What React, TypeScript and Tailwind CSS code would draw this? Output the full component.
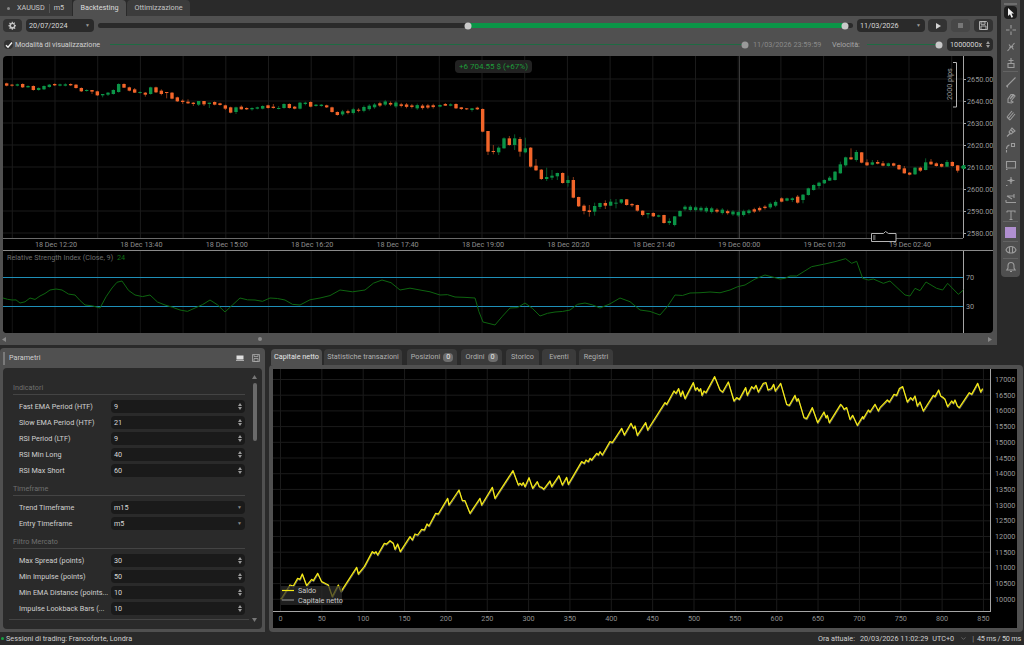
import { ChevronDown } from "lucide-react";

type Candle = [number, number, number, number?, number?];

// [kind 0 green / 1 orange, bodyTop, bodyBottom, wickTop, wickBottom] in zoomed px
const leftCandles: Candle[] = [
  [1,250,257],[1,254,257,252,260],[0,253,257],[1,252,262],[0,258,262,256,263],[1,258,270],[0,264,270],[0,258,268],[0,254,261],[1,252,256,250,258],
  [0,253,257,251,259],[0,253,257,250,259],[1,252,256,250,258],[1,254,264],[1,264,274],[0,270,273],[1,270,275,270,282],[1,274,286],[0,282,286,282,292],[0,278,284,276,288],
  [0,270,282],[0,252,276],[1,252,263,250,264],[1,262,272],[1,268,278,264,279],[0,276,279],[1,278,284,276,290],[0,262,282],[1,262,277,260,279],[1,272,282,268,286],
  [1,276,279,276,295],[1,278,296],[1,292,304],[1,302,306,298,312],[1,305,310,298,312],[1,308,312,306,318],[0,303,314,303,318],[1,303,313,303,318],[0,308,312,308,324],[1,306,314,304,316],
  [1,310,315],[1,316,326,314,330],[1,322,338],[0,322,336,320,342],[1,320,328,316,329],[1,324,328],[0,324,328,322,332],[0,322,326],[0,318,326],[1,316,324],
  [1,320,324,312,326],[0,324,326,318,328],[0,312,324],[1,312,324],[1,320,326],[0,308,326],[0,308,312,305,316],[1,306,320],[0,314,318],[0,314,318],
  [1,316,322],[1,322,336],[1,336,345],
];

const midCandles: Candle[] = [
  [0,150,155],[1,147,152,144,153],[0,148,152,145,154],[1,147,160],[1,157,162,156,165],[1,160,162,159,165],[0,160,165,159,170],[1,158,163,155,165],[1,162,230],[1,228,290,228,300],
  [1,288,290,270,298],[0,278,292,274,300],[0,250,280,247,281],[1,250,270,243,272],[0,250,270,238,285],[1,252,290,246,305],[0,280,292,248,295],[1,278,335,276,338],[1,332,346,312,348],[1,344,372,342,375],
  [0,366,372,338,378],[0,362,368,345,375],[0,354,364,353,375],[1,354,384],[0,375,384,362,395],[1,375,428,366,430],[1,426,454,425,456],[1,452,468,448,478],[1,466,471,450,485],[0,453,470,443,482],
  [0,444,456,443,462],[1,444,452,436,462],[0,440,452,432,453],[0,443,446,432,460],[0,433,443,432,447],[1,433,450,432,452],[1,447,451,444,456],[1,450,467,449,470],[1,467,480,466,484],[0,474,478,474,490],
  [1,474,484,472,486],[0,481,485],[1,480,504,479,506],[0,498,504,490,510],[0,484,510,483,514],[0,468,484],
];

const rightCandles: Candle[] = [
  [1,205,215,202,217],[0,205,212],[0,205,210,202,216],[1,200,218,195,221],[0,194,210,192,220],[0,175,195],[0,165,180,163,182],[0,158,168,155,176],[0,150,160],[0,143,152,138,153],
  [0,125,150],[0,103,130,95,131],[0,82,106,80,110],[1,82,88,55,90],[0,66,90,60,95],[1,67,98,66,100],[1,97,106,88,108],[0,97,104,90,106],[1,96,101,90,103],[1,100,107,93,109],
  [0,100,108,98,110],[1,100,107,98,109],[1,105,118,103,120],[1,115,130,108,131],[1,128,134],[0,113,133],[1,113,122,110,126],[0,97,120,85,121],[1,95,103,87,105],[1,100,108,97,110],
  [1,102,110,100,112],[0,96,110,90,111],[1,96,108],[1,106,122,105,128],[0,108,115],
];

const noise = (x: number) => {
  const n = Math.sin(x * 12.9898) * 43758.5453;
  return n - Math.floor(n);
};

const interp = (pts: number[][], x: number) => {
  for (let i = 1; i < pts.length; i++) {
    if (x <= pts[i][0]) {
      const t = (x - pts[i - 1][0]) / (pts[i][0] - pts[i - 1][0]);
      return pts[i - 1][1] + t * (pts[i][1] - pts[i - 1][1]);
    }
  }
  return pts[pts.length - 1][1];
};

const fillers = (x0: number, x1: number, pts: number[][]) => {
  const out: { x: number; kind: number; top: number; bottom: number; wt: number; wb: number }[] = [];
  for (let x = x0; x <= x1; x += 5.33) {
    const y = interp(pts, x);
    const r = noise(x);
    const h = 1 + r * 3;
    out.push({ x, kind: r > 0.5 ? 0 : 1, top: y - h / 2, bottom: y + h / 2, wt: y - h / 2 - 1.5, wb: y + h / 2 + 1.5 });
  }
  return out;
};

const toCandles = (list: Candle[], start: number, ox: number, oy: number) =>
  list.map((c, i) => ({
    x: ox + (start + i * 16) / 3,
    kind: c[0],
    top: oy + c[1] / 3,
    bottom: oy + c[2] / 3,
    wt: oy + (c[3] ?? c[1] - 2) / 3,
    wb: oy + (c[4] ?? c[2] + 2) / 3,
  }));

const candles = [
  ...toCandles(leftCandles, 20, 0, 0),
  ...fillers(342.6, 435, [[342, 113], [360, 110], [385, 103], [400, 105], [420, 107], [436, 106]]),
  ...toCandles(midCandles, 0, 440, 55),
  ...fillers(685, 777, [[685, 208], [700, 209], [720, 211], [740, 214], [760, 209], [778, 203]]),
  ...toCandles(rightCandles, 5, 780, 130),
];

const rsi1 = [[3,298],[12,300],[20,303],[30,298],[40,296],[50,290],[62,290],[75,295],[85,305],[100,308],[112,288],[122,281],[135,295],[150,295],[165,305],[180,310],[195,308],[210,300],[225,312],[240,298],[255,300],[270,298],[285,300],[300,305],[320,298],[340,290],[365,290],[382,280],[400,290],[420,290],[440,295],[455,297],[475,298],[483,322],[495,325],[510,308],[525,303],[540,316],[555,312],[570,310],[585,303],[600,308],[620,298],[640,310],[660,315],[675,295],[690,293],[710,292],[730,290],[745,285],[765,275]];
const rsi2 = [[0,447],[15,445],[30,438],[50,438],[95,410],[130,403],[165,395],[197,386],[215,400],[230,394],[248,445],[265,450],[280,447],[310,460],[330,453],[375,495],[390,498],[405,475],[420,482],[438,456],[470,475],[488,480],[503,460],[535,493],[550,480]];

// the rsi samples every candle, so break the long segments up a little
const rsiPoints = [...rsi1.flatMap(([x, y], i) => {
  const next = rsi1[i + 1];
  if (!next) return [[x, y]];
  return [[x, y], [(x + next[0]) / 2, (y + next[1]) / 2 + (noise(x) - 0.5) * 5]];
}), ...rsi2.map(([x, y]) => [780 + x / 3, 130 + y / 3])];
const rsiLine = rsiPoints.map((p) => p.join(",")).join(" ");

const eq1 = [[18,688],[45,645],[55,648],[68,625],[75,628],[82,612],[95,647],[110,628],[115,632],[128,610],[140,635],[160,645],[172,680],[190,645],[198,665],[245,592],[250,612],[268,590],[292,545],[298,550],[303,545],[308,555],[328,520],[335,522],[345,512],[355,520],[360,538],[368,522],[376,545],[405,500],[412,510],[420,492],[428,495],[440,478],[448,480],[456,462],[462,468],[482,430],[490,432],[518,385],[522,405],[552,360],[562,392],[570,392],[585,430],[615,385],[620,405],[652,352],[660,385],[714,302],[730,345],[735,340],[740,345],[745,338],[750,350],[762,323],[773,355],[787,335],[793,350],[800,352],[806,358],[825,333],[830,350],[852,317],[862,345],[875,322],[880,343],[920,275],[928,280],[933,270],[940,275],[945,265],[950,270],[965,250],[970,255],[975,245],[982,255],[1005,215],[1012,218],[1040,175],[1048,195],[1068,160],[1075,175],[1080,170]];
const eq2 = [[15,180],[22,208],[47,170],[53,192],[105,110],[110,115],[132,75],[138,82],[146,68],[152,90],[158,75],[165,98],[190,50],[196,72],[202,65],[207,75],[212,68],[216,88],[222,75],[228,80],[254,32],[270,72],[278,78],[295,48],[312,105],[320,95],[328,100],[347,65],[352,88],[365,62],[372,68],[378,58],[385,78],[400,52],[408,50],[414,72],[424,68],[431,55],[436,75],[452,52],[470,115],[478,118],[495,88],[500,105],[505,98],[522,155],[530,158],[547,125],[563,170],[582,138],[588,155],[592,148],[598,170],[632,115],[638,122],[642,130],[650,125],[660,160],[668,148],[682,178],[698,152],[700,158],[715,132],[720,138],[735,115],[745,135],[750,125],[772,102],[778,108],[792,85],[800,88],[808,68],[818,62],[832,108],[842,95],[848,102],[855,90],[862,120],[870,108],[880,135],[910,88],[915,92],[926,72],[932,90],[940,95],[945,100],[953,122],[965,105],[970,112],[975,102],[982,120],[988,125],[1018,80],[1025,85],[1043,52],[1052,78],[1058,68]];
const equityLine = [
  ...eq1.map(([x, y]) => [275 + x / 3, 370 + y / 3]),
  ...eq2.map(([x, y]) => [630 + x / 3, 366 + y / 3]),
].map((p) => p.join(",")).join(" ");

const timeLabels = ["18 Dec 12:20","18 Dec 13:40","18 Dec 15:00","18 Dec 16:20","18 Dec 17:40","18 Dec 19:00","18 Dec 20:20","18 Dec 21:40","19 Dec 00:00","19 Dec 01:20","19 Dec 02:40"];
const priceLabels = ["2650.00","2640.00","2630.00","2620.00","2610.00","2600.00","2590.00","2580.00"];

function MainChart() {
  const vLines = Array.from({ length: 23 }, (_, i) => 12.3 + i * 42.7);
  return (
    <svg width="990" height="277" viewBox="3 56 990 277" className="block rounded-sm bg-black">
      {vLines.map((x) => (
        <line key={x} x1={x} x2={x} y1={56} y2={333} stroke="#1b1b1b" strokeWidth="1" />
      ))}
      {priceLabels.map((_, i) => (
        <line key={i} x1={3} x2={963} y1={79 + i * 22} y2={79 + i * 22} stroke="#1b1b1b" strokeWidth="1" />
      ))}
      <line x1={739.5} x2={739.5} y1={56} y2={238} stroke="#3a3a3a" />
      {candles.map((c, i) => {
        const color = c.kind === 0 ? "#0b9447" : "#f2652a";
        const wick = c.kind === 0 ? "#0a6e36" : "#a8481f";
        return (
          <g key={i}>
            <line x1={c.x} x2={c.x} y1={c.wt} y2={c.wb} stroke={wick} strokeWidth="0.8" />
            <rect x={c.x - 1.7} y={c.top} width={3.4} height={Math.max(c.bottom - c.top, 1)} fill={color} />
          </g>
        );
      })}

      <rect x={3} y={239} width={960} height={11} fill="#000" />
      <rect x={3} y={251} width={960} height={82} fill="#000" />
      <line x1={3} x2={963} y1={238.5} y2={238.5} stroke="#6a6a6a" />
      <line x1={963.5} x2={963.5} y1={56} y2={238} stroke="#a5a5a5" />
      <line x1={3} x2={993} y1={250.5} y2={250.5} stroke="#8a8a8a" />
      <line x1={963.5} x2={963.5} y1={251} y2={333} stroke="#a5a5a5" />
      {timeLabels.map((t, i) => (
        <text key={t} x={56 + i * 85.4} y={247} textAnchor="middle" fontSize="7.25" fill="#8f8f8f">{t}</text>
      ))}
      {priceLabels.map((t, i) => (
        <g key={t}>
          <line x1={963} x2={966} y1={79.5 + i * 22} y2={79.5 + i * 22} stroke="#a5a5a5" />
          <text x={967} y={82 + i * 22} fontSize="7.25" fill="#999">{t}</text>
        </g>
      ))}
      <rect x={962.5} y={165} width={3} height={4} fill="#0b9447" />

      {/* pips ruler */}
      <path d="M953 62.5h3.5v44.5h-3.5" fill="none" stroke="#b5b5b5" />
      <text transform="translate(952 100) rotate(-90)" fontSize="7.25" fill="#999">2000 pips</text>

      {/* zoom handle */}
      <path d="M871.5 233.5h12l2-2 3 2h7.5v8h-24.5z" fill="#000" stroke="#b5b5b5" />
      <rect x={873} y={235} width={2.5} height={5} fill="#555" />

      {/* rsi panel */}
      {vLines.map((x) => (
        <line key={x} x1={x} x2={x} y1={251} y2={333} stroke="#141414" />
      ))}
      <line x1={739.5} x2={739.5} y1={251} y2={333} stroke="#2c2c2c" />
      <line x1={3} x2={963} y1={277.5} y2={277.5} stroke="#1f8fb8" />
      <line x1={3} x2={963} y1={306.5} y2={306.5} stroke="#1f8fb8" />
      <polyline points={rsiLine} fill="none" stroke="#0e6510" strokeWidth="1" />
      <text x={7} y={260} fontSize="7.25" fill="#6f6f6f">Relative Strength Index (Close, 9)</text>
      <text x={117} y={260} fontSize="7.25" fill="#0e6f14">24</text>
      <text x={966} y={280} fontSize="7.25" fill="#999">70</text>
      <text x={966} y={309} fontSize="7.25" fill="#999">30</text>
    </svg>
  );
}

function EquityChart() {
  const xs = Array.from({ length: 18 }, (_, i) => i * 50);
  const ys = Array.from({ length: 15 }, (_, i) => 17000 - i * 500);
  return (
    <svg width="744" height="259" viewBox="273 369 744 259" className="block bg-black">
      {xs.map((v, i) => (
        <line key={v} x1={280.5 + i * 41.35} x2={280.5 + i * 41.35} y1={369} y2={611} stroke="#1b1b1b" />
      ))}
      {ys.map((v, i) => (
        <line key={v} x1={273} x2={990} y1={379.5 + i * 15.7} y2={379.5 + i * 15.7} stroke="#1b1b1b" />
      ))}
      <polyline points={equityLine} fill="none" stroke="#5e5e5e" strokeWidth="1" transform="translate(0.4 1.2)" />
      <polyline points={equityLine} fill="none" stroke="#f5ea14" strokeWidth="1.3" strokeLinejoin="round" />
      <line x1={273} x2={990} y1={611.5} y2={611.5} stroke="#a5a5a5" />
      <line x1={990.5} x2={990.5} y1={369} y2={612} stroke="#a5a5a5" />
      {xs.map((v, i) => (
        <text key={v} x={280.5 + i * 41.35} y={621} textAnchor="middle" fontSize="7.25" fill="#8f8f8f">{v}</text>
      ))}
      {ys.map((v, i) => (
        <text key={v} x={995} y={382 + i * 15.7} fontSize="7.25" fill="#999">{v}</text>
      ))}
      <rect x={281} y={586} width={61} height={19} fill="#2c2c2c" fillOpacity="0.72" />
      <line x1={282} x2={294} y1={590.5} y2={590.5} stroke="#f5ea14" strokeWidth="1.2" />
      <line x1={282} x2={294} y1={600} y2={600} stroke="#888" strokeWidth="1.2" />
      <text x={298} y={593} fontSize="7.25" fill="#c8c8c8">Saldo</text>
      <text x={298} y={602.5} fontSize="7.25" fill="#c8c8c8">Capitale netto</text>
    </svg>
  );
}

function ToolIcon({ d, fill }: { d: string; fill?: boolean }) {
  return (
    <svg width="12" height="12" viewBox="0 0 12 12" className="block">
      <path d={d} fill={fill ? "#f0f0f0" : "none"} stroke={fill ? "none" : "#9c9c9c"} strokeWidth="1.1" />
    </svg>
  );
}

const toolGroups: string[][] = [
  [
    "M3 1l6 5.5H6.5L8 10l-1.5.7L5 7.2 3 9z",
    "M6 1v3.5M6 7.5V11M1 6h3.5M7.5 6H11",
    "M9.5 2L2.5 10M4 3.5l1.5 2L4.5 7M8 5l-1 1.5L8.5 8.5",
    "M6 1v5M3.5 3.5h5M3 6.5h6v4H3z",
  ],
  [
    "M1.5 10.5l9-9M1 10h1.5v1.5",
    "M3 10.5V7l3-4.5h2L5 7l4-4 1 1-4 5 2 1-1.5 1z",
    "M2 8l5-6M3.5 9.5l5-6M5 11l5-6M2 8l3 3",
    "M2 10.5l3-3M4 6l3-4 3 3-4 3zM6 4l2 2",
    "M1.5 10.5V8M1.5 7c0-2 1-3.5 3-4M6.5 1.5h3v3h-3z",
    "M1.5 2.5h9v6.5h-9zM1 10.5h1.5",
    "M6 2v7M2.5 5.5h7M1 10.5h1.5M6 4l1.5 1.5L6 7 4.5 5.5z",
    "M2 4h7M9 2v4M2 4l5 3M1 10.5h10M1 8v2.5",
    "M2 2h8v1.5M2 3.5V2M6 2v8.5M4.5 10.5h3",
  ],
];

function Toolbar() {
  return (
    <div className="flex h-[277px] w-[19px] flex-col items-center rounded-b-sm bg-[#4f4f4f]">
      <div className="mt-[3px] h-[2px] w-[13px] bg-[#6e6e6e]" />
      <div className="mt-[1px] flex h-[13px] w-[13px] items-center justify-center rounded-sm bg-[#1d1d1d]">
        <ToolIcon d={toolGroups[0][0]} fill />
      </div>
      <div className="mt-[5px] flex flex-col items-center gap-[4.7px]">
        {toolGroups[0].slice(1).map((d) => <ToolIcon key={d} d={d} />)}
      </div>
      <div className="mt-[1.500px] mb-[4px] h-px w-[15px] bg-[#636363]" />
      <div className="flex flex-col items-center gap-[4.6px]">
        {toolGroups[1].map((d) => <ToolIcon key={d} d={d} />)}
      </div>
      <div className="mb-[5px] h-px w-[15px] bg-[#636363]" />
      <div className="h-[11px] w-[11px] bg-[#b08fd0]" />
      <div className="mt-[3px] mb-[2px] h-px w-[15px] bg-[#636363]" />
      <ToolIcon d="M1 6c1-3 3-3.5 5-3.5S10 3 11 6c-1 2.5-3 3-5 3S2 8.5 1 6zM4.5 3v6M7.5 3v6" />
      <div className="mt-[2px] mb-[2px] h-px w-[15px] bg-[#636363]" />
      <ToolIcon d="M6 1.5c2 0 3 1.3 3 3.5v2l1.2 2H1.8L3 7V5c0-2.200 1-3.500 3-3.500zM5 10.500h2" />
    </div>
  );
}

function Thumb({ className }: { className: string }) {
  return <div className={`absolute top-1/2 h-[7px] w-[7px] -translate-x-1/2 -translate-y-1/2 rounded-full ${className}`} />;
}

function DateBox({ value, className }: { value: string; className: string }) {
  return (
    <div className={`flex h-[13px] items-center justify-between rounded-sm bg-[#2a2a2a] pl-[3px] pr-[4px] text-[#d8d8d8] ${className}`}>
      <span>{value}</span>
      <span className="text-[5px] text-[#999]">▼</span>
    </div>
  );
}

function Spinner() {
  return (
    <span className="flex flex-col items-center gap-[1px] leading-none">
      <svg width="4" height="3" viewBox="0 0 4 3" className="block"><path d="M2 0l2 3H0z" fill="#9a9a9a" /></svg>
      <svg width="4" height="3" viewBox="0 0 4 3" className="block"><path d="M2 3L0 0h4z" fill="#9a9a9a" /></svg>
    </span>
  );
}

function TopControls() {
  return (
    <div className="h-[40px] bg-[#505050] pl-[3px] pr-[4px]">
      <div className="flex h-[16px] items-end">
        <div className="flex h-[13px] w-[19px] items-center justify-center rounded-sm bg-[#333]">
          <svg width="9" height="9" viewBox="0 0 24 24" className="block">
            <path d="M12 8a4 4 0 100 8 4 4 0 000-8zm9 5.500v-3l-3-.5-.8-1.900 1.800-2.500-2.100-2.100-2.500 1.800L13.500 5 13 2h-3l-.5 3-1.900.8-2.500-1.800L3 6.100l1.800 2.500L4 10.500l-3 .5v3l3 .5.8 1.900L3 19.400l2.100 2.100 2.500-1.800 1.900.8.5 3h3l.5-3 1.900-.8 2.500 1.800 2.100-2.100-1.800-2.500.8-1.900z" fill="#c4c4c4" fillRule="evenodd" />
          </svg>
        </div>
        <DateBox value="20/07/2024" className="ml-[4px] w-[68px]" />
        <div className="relative mx-[4px] mb-[4px] h-[5px] flex-1 rounded-full bg-[#2a2a2a]">
          <div className="ml-[370px] h-[5px] w-[377px] bg-[#0b9447]" />
          <Thumb className="left-[370px] bg-[#c9c9c9]" />
          <Thumb className="left-[747px] bg-[#c9c9c9]" />
        </div>
        <DateBox value="11/03/2026" className="w-[68px]" />
        <div className="ml-[3px] flex h-[13px] w-[19px] items-center justify-center rounded-sm bg-[#333]">
          <svg width="6" height="6" viewBox="0 0 6 6" className="block"><path d="M1 0l5 3-5 3z" fill="#d5d5d5" /></svg>
        </div>
        <div className="ml-[4px] flex h-[13px] w-[19px] items-center justify-center rounded-sm bg-[#474747]">
          <div className="h-[5px] w-[5px] bg-[#777]" />
        </div>
        <div className="ml-[4px] flex h-[13px] w-[19px] items-center justify-center rounded-sm bg-[#333]">
          <svg width="9" height="9" viewBox="0 0 9 9" className="block"><path d="M.5.500h7l1 1v7h-8zM2 .8h4v2.500H2zM2 5h5v3.500H2z" fill="none" stroke="#bdbdbd" strokeWidth="0.9" /></svg>
        </div>
      </div>
      <div className="mt-[6px] flex h-[13px] items-center">
        <div className="ml-[1px] flex h-[9px] w-[9px] items-center justify-center rounded-sm bg-[#333]">
          <svg width="8" height="8" viewBox="0 0 8 8" className="block"><path d="M1 4.200l2 2L7 1.500" fill="none" stroke="#f2f2f2" strokeWidth="1.400" /></svg>
        </div>
        <span className="ml-[2px] w-[95px] shrink-0 tracking-[-0.06px] text-[#cfcfcf]">Modalità di visualizzazione</span>
        <div className="relative h-px w-[635px] bg-[#1f6b43]">
          <Thumb className="left-[635px] bg-[#9a9a9a]" />
        </div>
        <span className="ml-[8px] w-[79px] shrink-0 text-[#8a8a8a]">11/03/2026 23:59:59</span>
        <span className="w-[35px] shrink-0 text-[#a6a6a6]">Velocità:</span>
        <div className="relative h-px w-[73px] bg-[#1f6b43]">
          <Thumb className="left-[72px] bg-[#c9c9c9]" />
        </div>
        <div className="ml-auto flex h-[13px] w-[46px] items-center justify-between rounded-sm bg-[#2a2a2a] pl-[3px] pr-[3px] text-[#d8d8d8]">
          <span>1000000x</span>
          <Spinner />
        </div>
      </div>
    </div>
  );
}

const sections: { title: string; rows: { label: string; value: string; select?: boolean }[] }[] = [
  {
    title: "Indicatori",
    rows: [
      { label: "Fast EMA Period (HTF)", value: "9" },
      { label: "Slow EMA Period (HTF)", value: "21" },
      { label: "RSI Period (LTF)", value: "9" },
      { label: "RSI Min Long", value: "40" },
      { label: "RSI Max Short", value: "60" },
    ],
  },
  {
    title: "Timeframe",
    rows: [
      { label: "Trend Timeframe", value: "m15", select: true },
      { label: "Entry Timeframe", value: "m5", select: true },
    ],
  },
  {
    title: "Filtro Mercato",
    rows: [
      { label: "Max Spread (points)", value: "30" },
      { label: "Min Impulse (points)", value: "50" },
      { label: "Min EMA Distance (points...", value: "10" },
      { label: "Impulse Lookback Bars (...", value: "10" },
    ],
  },
];

function ParamsPanel() {
  return (
    <div className="flex h-[284px] w-[265px] shrink-0 flex-col rounded-t-sm bg-[#505050] px-[3px] pb-[3px]">
      <div className="flex h-[20px] items-center">
        <div className="h-[13px] w-[2px] bg-[#7a7a7a]" />
        <span className="ml-[4px] text-[#cfcfcf]">Parametri</span>
        <svg width="8" height="7" viewBox="0 0 8 7" className="ml-auto mr-[8px] block"><path d="M.5.500h7v4h-7z" fill="#e0e0e0" /><path d="M0 5.500h8" stroke="#aaa" /></svg>
        <svg width="8" height="8" viewBox="0 0 8 8" className="mr-[2px] block"><path d="M.5.500h7v7h-7zM2 .5v2h4v-2M2 4.500h4v3H2z" fill="none" stroke="#aaa" strokeWidth="0.8" /></svg>
      </div>
      <div className="relative flex-1 rounded-sm bg-[#2a2a2a] pl-[10px] pr-[17px] pt-[13px]">
        {sections.map((s) => (
          <div key={s.title} className="mb-[5px]">
            <div className="flex h-[13px] items-center text-[#6f6f6f]">{s.title}</div>
            <div className="mb-[5px] h-px bg-[#444]" />
            <div className="flex flex-col gap-[3px] pl-[6px]">
              {s.rows.map((r) => (
                <div key={r.label} className="flex h-[13px] items-center">
                  <span className="w-[92px] shrink-0 whitespace-nowrap text-[#d0d0d0]">{r.label}</span>
                  <div className="flex h-[13px] flex-1 items-center justify-between rounded-sm bg-[#1a1a1a] pl-[3px] pr-[3px] text-[#d8d8d8]">
                    <span>{r.value}</span>
                    {r.select ? <span className="text-[5px] text-[#888]">▼</span> : <Spinner />}
                  </div>
                </div>
              ))}
            </div>
          </div>
        ))}
        <div className="absolute bottom-[9px] left-[6px] right-[13px] h-px bg-[#444]" />
        <div className="absolute right-[5px] top-[15px] h-[58px] w-[4px] rounded-full bg-[#6a6a6a]" />
        <svg width="5" height="4" viewBox="0 0 5 4" className="absolute right-[5px] top-[7px] block"><path d="M2.500 0L5 4H0z" fill="#777" /></svg>
        <svg width="5" height="4" viewBox="0 0 5 4" className="absolute bottom-[7px] right-[5px] block"><path d="M2.500 4L0 0h5z" fill="#777" /></svg>
      </div>
    </div>
  );
}

const tabs: { label: string; count?: string; cls: string }[] = [
  { label: "Capitale netto", cls: "w-[51px] ml-[2px]" },
  { label: "Statistiche transazioni", cls: "w-[78px] ml-[2px]" },
  { label: "Posizioni", count: "0", cls: "w-[50px] ml-[5px]" },
  { label: "Ordini", count: "0", cls: "w-[41px] ml-[4px]" },
  { label: "Storico", cls: "w-[33px] ml-[4px]" },
  { label: "Eventi", cls: "w-[34px] ml-[3px]" },
  { label: "Registri", cls: "w-[34px] ml-[3px]" },
];

function ResultsPanel() {
  return (
    <div className="ml-[4px] flex h-[284px] flex-1 flex-col pr-[1px]">
      <div className="flex h-[17px] items-end">
        {tabs.map((t, i) => (
          <div
            key={t.label}
            className={`flex h-[16px] items-center justify-center gap-[3px] rounded-t-sm ${t.cls} ${i === 0 ? "bg-[#505050] text-[#e6e6e6]" : "bg-[#3b3b3b] text-[#b0b0b0]"}`}
          >
            <span className="whitespace-nowrap">{t.label}</span>
            {t.count && <span className="flex h-[9px] w-[10px] items-center justify-center rounded-sm bg-[#6d6d6d] text-[#e8e8e8]">{t.count}</span>}
          </div>
        ))}
      </div>
      <div className="h-[267px] rounded-sm bg-[#505050] pl-[4px] pr-[5px] pt-[4px]">
        <EquityChart />
      </div>
    </div>
  );
}

export default function App() {
  return (
    <div className="flex h-[645px] w-[1024px] flex-col overflow-hidden bg-[#2a2a2a] font-['Roboto',sans-serif] text-[7.25px] leading-none">
      <div className="flex h-[345px] shrink-0">
        <div className="flex w-[997px] shrink-0 flex-col">
          <div className="flex h-[16px] items-stretch gap-[1px]">
            <div className="flex w-[72px] items-center bg-[#3a3a3a] pl-[7px] text-[#c8c8c8]">
              <div className="h-[3px] w-[3px] rounded-full bg-[#888]" />
              <span className="ml-[7px]">XAUUSD</span>
              <div className="mx-[4px] h-[9px] w-px bg-[#555]" />
              <span>m5</span>
            </div>
            <div className="flex w-[53px] items-center justify-center rounded-t-sm bg-[#505050] text-[#dcdcdc]">Backtesting</div>
            <div className="flex w-[63px] items-center justify-center rounded-t-sm bg-[#3c3c3c] text-[#c4c4c4]">Ottimizzazione</div>
          </div>
          <TopControls />
          <div className="relative h-[277px] bg-[#505050] pl-[3px] pr-[4px]">
            <MainChart />
            <div className="absolute left-[455px] top-[4px] flex h-[13px] w-[77px] items-center justify-center whitespace-nowrap rounded-sm bg-[#222] text-[8px] text-[#1f9a3a]">
              +6 704.55 $ (+67%)
            </div>
          </div>
          <div className="flex h-[12px] items-center bg-[#505050] pl-[2px] pr-[5px]">
            <svg width="4" height="5" viewBox="0 0 4 5" className="block"><path d="M0 2.500L4 0v5z" fill="#888" /></svg>
            <div className="ml-[252px] h-[4px] w-[4px] rounded-full bg-[#8a8a8a]" />
            <svg width="4" height="5" viewBox="0 0 4 5" className="ml-auto block"><path d="M4 2.500L0 0v5z" fill="#888" /></svg>
          </div>
        </div>
        <div className="ml-[4px]">
          <Toolbar />
        </div>
      </div>
      <div className="mt-[3px] flex h-[284px] shrink-0">
        <ParamsPanel />
        <ResultsPanel />
      </div>
      <div className="flex h-[13px] items-center pl-[1px] pr-[3px] text-[#d0d0d0]">
        <div className="h-[3px] w-[3px] rounded-full bg-[#18a040]" />
        <span className="ml-[2px]">Sessioni di trading: Francoforte, Londra</span>
        <span className="ml-auto">Ora attuale:</span>
        <span className="ml-[5px]">20/03/2026 11:02:29</span>
        <span className="ml-[4px]">UTC+0</span>
        <ChevronDown size={7} className="ml-[6px] text-[#888]" />
        <span className="ml-[5px] text-[#999]">|</span>
        <span className="ml-[3px] whitespace-nowrap tracking-[-0.2px]">45 ms / 50 ms</span>
      </div>
    </div>
  );
}
